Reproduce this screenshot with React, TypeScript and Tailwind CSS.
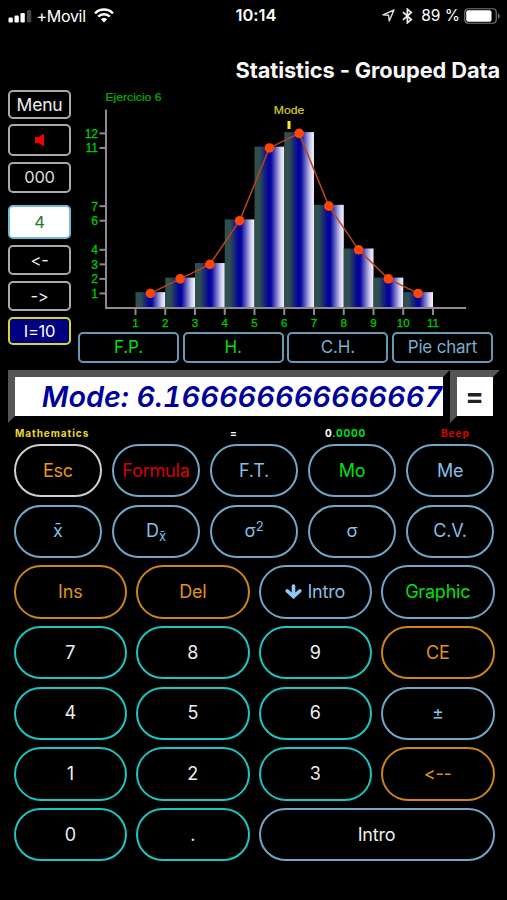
import { clsx } from "clsx";
import type { ReactNode } from "react";

const FREQUENCIES = [1, 2, 3, 6, 11, 12, 7, 4, 2, 1];
const Y_LABELS = [1, 2, 3, 4, 6, 7, 11, 12];
const X_LABELS = [1, 2, 3, 4, 5, 6, 7, 8, 9, 10, 11];

const chartX = (value: number) => 57.5 + (value - 1) * 29.75;
const chartY = (value: number) => 218 - value * 14.55;

type Tone = "white" | "sky" | "orange" | "cyan";

interface KeyProps {
  children: ReactNode;
  tone?: Tone;
  text?: string;
  className?: string;
}

const borders: Record<Tone, string> = {
  white: "border-[#d0d0d0]",
  sky: "border-[#72a5c6]",
  orange: "border-[#cd8613]",
  cyan: "border-[#1dc5c2]",
};

function Key({ children, tone = "sky", text = "text-[#87bfe6]", className }: KeyProps) {
  return (
    <button
      className={clsx(
        "flex h-[53.2px] items-center justify-center rounded-full border-2 text-[18px] leading-none tracking-[-0.2px]",
        borders[tone],
        text,
        className
      )}
    >
      {children}
    </button>
  );
}

function SideButton({ children, className }: { children: ReactNode; className: string }) {
  return (
    <button
      className={clsx(
        "flex w-[63px] items-center justify-center rounded-[5px] border-2 text-[17.5px] leading-none tracking-[-0.2px]",
        className
      )}
    >
      {children}
    </button>
  );
}

function StatusBar() {
  return (
    <div className="grid h-[31px] grid-cols-3 items-center pl-[8px] pr-[7px] text-[16.5px] leading-none">
      <div className="flex items-center">
        <svg width="24" height="14" viewBox="0 0 24 14" fill="#fff">
          <rect x="0.5" y="8.5" width="4.3" height="5" rx="1.2" />
          <rect x="6.5" y="6.5" width="4.3" height="7" rx="1.2" />
          <rect x="12.5" y="4" width="4.3" height="9.5" rx="1.2" />
          <rect x="19" y="1" width="4.3" height="12.5" rx="1.2" fill="#444" />
        </svg>
        <span className="ml-[4.5px] text-[16px] tracking-[-0.3px]">+Movil</span>
        <svg className="ml-[8px]" width="20" height="15" viewBox="0 0 20 15" fill="none" stroke="#fff">
          <path d="M1 5.3a12.8 12.8 0 0 1 18 0" strokeWidth="2.5" />
          <path d="M4.2 8.7a8.2 8.2 0 0 1 11.6 0" strokeWidth="2.5" />
          <path d="M10 14.4 6.9 11.3a4.4 4.4 0 0 1 6.2 0z" fill="#fff" stroke="none" />
        </svg>
      </div>
      <div className="pl-[4px] text-center text-[16.5px] font-semibold">10:14</div>
      <div className="flex items-center justify-end">
        <svg width="13" height="13" viewBox="0 0 13 13" fill="none" stroke="#ddd" strokeWidth="1.4" strokeLinejoin="round">
          <path d="M12 1 7.2 12 6.6 6.2 1 5.8z" />
        </svg>
        <svg className="ml-[7px]" width="11" height="16" viewBox="0 0 11 16" fill="none" stroke="#eee" strokeWidth="1.7">
          <path d="m1 4.2 8.3 7.3-3.9 3.3V1.2l3.9 3.3L1 11.8" />
        </svg>
        <span className="ml-[8px] whitespace-nowrap text-[15.5px]">89 %</span>
        <svg className="ml-[4px]" width="36" height="16" viewBox="0 0 36 16">
          <rect x="0.75" y="0.75" width="31.5" height="14.5" rx="3.5" fill="none" stroke="#777" strokeWidth="1.2" />
          <rect x="2.2" y="2.2" width="25.3" height="11.6" rx="2" fill="#fff" />
          <path d="M34 5.2c2.3 1 2.3 4.6 0 5.6z" fill="#777" />
        </svg>
      </div>
    </div>
  );
}

function Histogram() {
  const points = FREQUENCIES.map((f, i) => ({ x: chartX(i + 1.5), y: chartY(f) }));

  return (
    <svg
      className="block"
      width="415"
      height="242"
      viewBox="0 0 415 242"
      fontFamily="'Liberation Sans', sans-serif"
      fontSize="11.5"
    >
      <defs>
        <linearGradient id="bar">
          <stop offset="0" stopColor="#2f4f4f" />
          <stop offset="0.17" stopColor="#2f4f4f" />
          <stop offset="0.48" stopColor="#00009c" />
          <stop offset="0.56" stopColor="#0808a0" />
          <stop offset="0.88" stopColor="#d0cdec" />
          <stop offset="1" stopColor="#f4f2ff" />
        </linearGradient>
      </defs>

      <text x="27.5" y="10.5" fill="#00b400" stroke="#00b400" strokeWidth="0.2" textLength="56" lengthAdjust="spacingAndGlyphs">
        Ejercicio 6
      </text>

      {FREQUENCIES.map((f, i) => (
        <rect key={i} x={chartX(i + 1)} y={chartY(f) - 1.3} width="29.75" height={218.5 - chartY(f)} fill="url(#bar)" />
      ))}

      {/* axes and ticks */}
      <g stroke="#8d8990" strokeWidth="2" fill="none">
        <path d="M28 19.5V218H388" />
        {Y_LABELS.map((v) => (
          <path key={v} d={`M21.5 ${chartY(v)}H28`} />
        ))}
        {X_LABELS.map((v) => (
          <path key={v} d={`M${chartX(v)} 218V225`} />
        ))}
      </g>

      <g fill="#00c800" stroke="#00c800" strokeWidth="0.3">
        {Y_LABELS.map((v) => (
          <text key={v} x="20" y={chartY(v) + 4.5} textAnchor="end" fontSize="12">{v}</text>
        ))}
        {X_LABELS.map((v) => (
          <text key={v} x={chartX(v)} y="237" textAnchor="middle">{v}</text>
        ))}
      </g>

      {/* frequency polygon */}
      <polyline points={points.map((p) => `${p.x},${p.y}`).join(" ")} fill="none" stroke="#b84520" strokeWidth="1.5" />
      {points.map((p) => (
        <circle key={p.x} cx={p.x} cy={p.y} r="4.8" fill="#ff4500" />
      ))}

      <text
        x="211"y="24"
        textAnchor="middle"
        fill="#d8d020"
        stroke="#d8d020"
        strokeWidth="0.2"
        textLength="30.5"
        lengthAdjust="spacingAndGlyphs"
      >
        Mode
      </text>
      <rect x="209.5" y="31" width="3" height="8" fill="#ffee10" />
    </svg>
  );
}

const chartTabs = [
  { label: "F.P.", text: "text-[#00df10]" },
  { label: "H.", text: "text-[#00df10]" },
  { label: "C.H.", text: "text-[#79afd0]" },
  { label: "Pie chart", text: "text-[#79afd0]" },
];

export default function App() {
  return (
    <div className="h-[900px] w-[507px] overflow-hidden bg-black font-['Inter',sans-serif] text-white [font-feature-settings:'calt'_0]">
      <StatusBar />

      <h1 className="mt-[24px] pr-[7px] text-right text-[21.8px] font-bold leading-[30px] tracking-[-0.1px] text-[#f8f8f8]">
        Statistics - Grouped Data
      </h1>

      <div className="mt-[5px] flex h-[280px] gap-[7px] pl-[8px]">
        <div className="flex flex-col">
          <SideButton className="h-[29px] border-[#aaa] text-[#eee]">Menu</SideButton>
          <SideButton className="mt-[5px] h-[32px] border-[#aaa]">
            <svg width="10" height="14" viewBox="0 0 10 14" fill="#f50000">
              <path d="M0 4h3.8L9 .5v13L3.8 10H0z" />
            </svg>
          </SideButton>
          <SideButton className="mt-[6px] h-[31px] border-[#aaa] text-[#ddd]">
            <span className="text-[16.5px]">000</span>
          </SideButton>
          <SideButton className="mt-[12px] h-[34px] border-[#72b9dc] bg-white text-[#28742c]">
            <span className="text-[16.5px]">4</span>
          </SideButton>
          <SideButton className="mt-[6px] h-[30px] border-[#aaa] text-[#eee]">
            <span className="text-[16.5px]">&lt;-</span>
          </SideButton>
          <SideButton className="mt-[6px] h-[30px] border-[#aaa] text-[#eee]">
            <span className="text-[16.5px]">-&gt;</span>
          </SideButton>
          <SideButton className="mt-[6px] h-[28px] border-[#d6d62c] bg-[#000080]">
            <span className="text-[16.5px]">I=10</span>
          </SideButton>
        </div>

        <div className="w-[415px]">
          <Histogram />
          <div className="grid grid-cols-4 gap-[3.7px]">
            {chartTabs.map((tab) => (
              <button
                key={tab.label}
                className={clsx(
                  "h-[31px] rounded-[5px] border-2 border-[#6799b5] text-[17px] leading-none tracking-[-0.2px]",
                  tab.text
                )}
              >
                {tab.label}
              </button>
            ))}
          </div>
        </div>
      </div>

      {/* result display */}
      <div className="flex pl-[8px]">
        <div className="flex h-[53px] w-[442px] items-center justify-end whitespace-nowrap border-[7px] border-b-black border-l-[#555] border-r-black border-t-[#555] bg-white pt-px text-[28.8px] font-semibold italic tabular-nums leading-none tracking-[0.04px] text-[#00009c]">
          Mode: 6.166666666666667
        </div>
        <div className="flex h-[53px] w-[50px] items-center justify-center border-[7px] border-b-black border-l-[#555] border-r-black border-t-[#555] bg-white pr-px text-[27.5px] font-bold leading-none text-[#222]">
          =
        </div>
      </div>

      <div className="grid h-[21px] grid-cols-[210px_100px_100px_1fr] items-center pb-[2px] pl-[15px] text-[10px] font-bold leading-none tracking-[0.6px]">
        <span className="tracking-[0.95px] text-[#eadb20]">Mathematics</span>
        <span className="pl-[5px]">=</span>
        <span className="tracking-[0.75px]">
          0<span className="text-[#00df20]">.0000</span>
        </span>
        <span className="pl-[16px] tracking-[0.95px] text-[#dc0000]">Beep</span>
      </div>

      <div className="flex flex-col gap-[7.5px] pl-[13.5px] pr-[12.5px]">
        <div className="grid grid-cols-5 gap-x-[9.2px] gap-y-[7.5px]">
          <Key tone="white" text="text-[#e89a10]">Esc</Key>
          <Key text="text-[#d60000]">Formula</Key>
          <Key>F.T.</Key>
          <Key text="text-[#00e010]">Mo</Key>
          <Key>Me</Key>
          <Key>x̄</Key>
          <Key>
            <span>D<sub className="text-[13px]">x̄</sub></span>
          </Key>
          <Key>
            <span>σ<sup className="text-[13px]">2</sup></span>
          </Key>
          <Key>σ</Key>
          <Key>C.V.</Key>
        </div>

        <div className="grid grid-cols-4 gap-x-[9px] gap-y-[7.5px]">
          <Key tone="orange" text="text-[#e09512]">Ins</Key>
          <Key tone="orange" text="text-[#e09512]">Del</Key>
          <Key>
            <svg
              className="mr-[5px]"
              width="17"
              height="16"
              viewBox="0 0 17 16"
              fill="none"
              stroke="#8fcaf8"
              strokeWidth="3.6"
              strokeLinecap="round"
            >
              <path d="M8.5 2v9.5M2.3 7l6.2 5.6L14.7 7" />
            </svg>
            Intro
          </Key>
          <Key text="text-[#00e010]">Graphic</Key>

          <Key tone="cyan" text="text-[#eee]">7</Key>
          <Key tone="cyan" text="text-[#eee]">8</Key>
          <Key tone="cyan" text="text-[#eee]">9</Key>
          <Key tone="orange" text="text-[#e09512]">CE</Key>

          <Key tone="cyan" text="text-[#eee]">4</Key>
          <Key tone="cyan" text="text-[#eee]">5</Key>
          <Key tone="cyan" text="text-[#eee]">6</Key>
          <Key>±</Key>

          <Key tone="cyan" text="text-[#eee]">1</Key>
          <Key tone="cyan" text="text-[#eee]">2</Key>
          <Key tone="cyan" text="text-[#eee]">3</Key>
          <Key tone="orange" text="text-[#e09512]">&lt;--</Key>

          <Key tone="cyan" text="text-[#eee]">0</Key>
          <Key tone="cyan" text="text-[#eee]">.</Key>
          <Key text="text-[#eee]" className="col-span-2">Intro</Key>
        </div>
      </div>
    </div>
  );
}
